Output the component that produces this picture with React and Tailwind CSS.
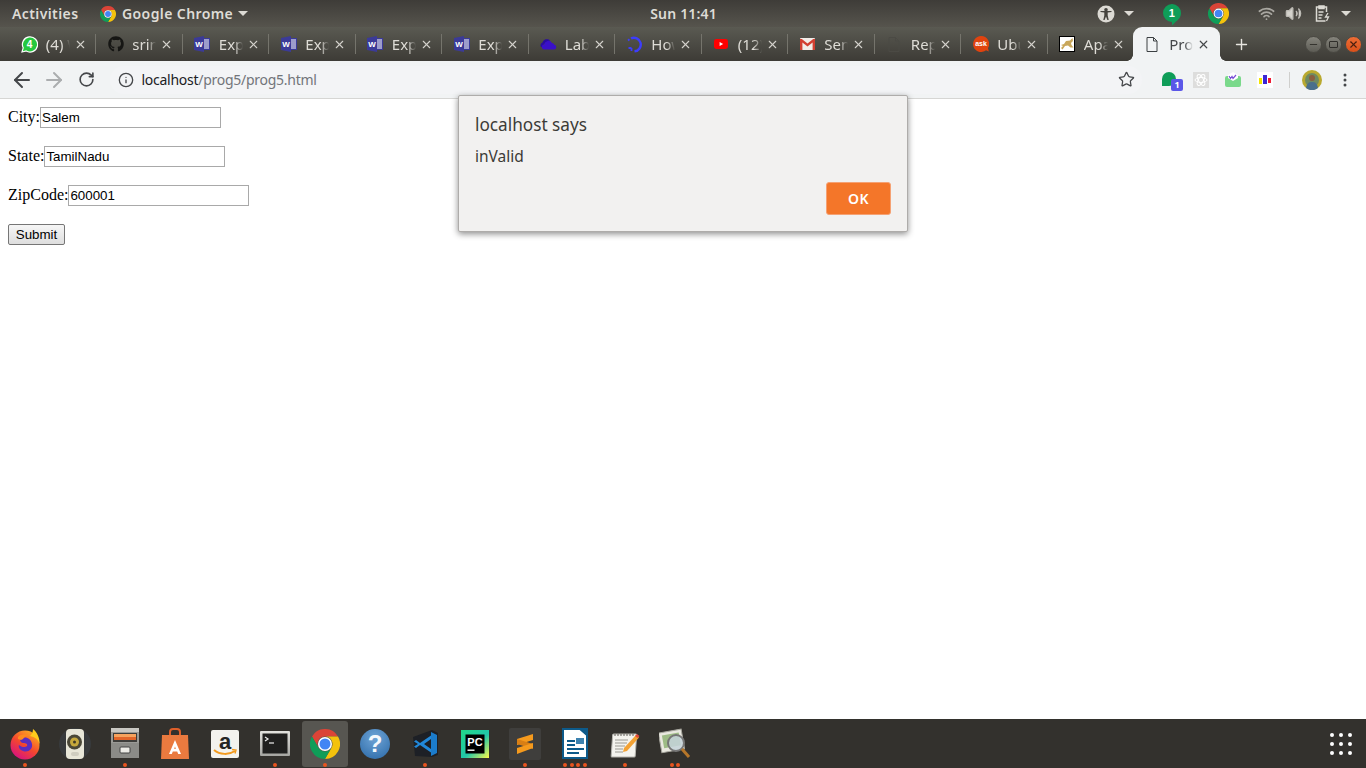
import React from "react";
import { ArrowLeft, ArrowRight, RotateCw, Star, Info, X, Plus, Minus, Wifi, Volume2 } from "lucide-react";
import { FaGithub } from "react-icons/fa";

const ui = "font-['Noto_Sans','Open_Sans',sans-serif]";

function Chrome({ size = 24 }) {
  return (
    <svg width={size} height={size} viewBox="0 0 24 24">
      <path d="M1.6 6A12 12 0 0 1 22.4 6H12A6 6 0 0 0 6.8 15Z" fill="#db4437" />
      <path d="M22.4 6A12 12 0 0 1 12 24L17.2 15A6 6 0 0 0 12 6Z" fill="#f4c20d" />
      <path d="M12 24A12 12 0 0 1 1.6 6L6.8 15A6 6 0 0 0 17.2 15Z" fill="#0f9d58" />
      <circle cx="12" cy="12" r="5.6" fill="#fff" />
      <circle cx="12" cy="12" r="4.4" fill="#4285f4" />
    </svg>
  );
}

const Whats = () => (
  <svg width="17" height="17" viewBox="0 0 17 17">
    <path d="M1 16l1.2-4.2A7.6 7.6 0 1 1 5.2 15z" fill="#25c83f" stroke="#fff" strokeWidth="1.2" />
    <text x="8.6" y="12" fontSize="10" fontWeight="700" fill="#fff" textAnchor="middle" fontFamily="Liberation Sans">4</text>
  </svg>
);
const Git = () => <FaGithub size={16} color="#161614" />;
const Word = () => (
  <svg width="16" height="16" viewBox="0 0 16 16">
    <rect x="8" y="2" width="8" height="12" fill="#3b3a98" />
    <path d="M0 2l10-2v16L0 14z" fill="#3b3a98" />
    <rect x="10" y="3.500" width="5" height="9" fill="#fff" />
    <path d="M10 5h5M10 7h5M10 9h5M10 11h5" stroke="#3b3a98" strokeWidth="1" />
    <text x="5" y="10.500" fontSize="8" fontWeight="700" fill="#fff" textAnchor="middle" fontFamily="Liberation Sans">W</text>
  </svg>
);
const Cloud = () => (
  <svg width="17" height="12" viewBox="0 0 17 12">
    <path d="M1 9a3 3 0 0 1 1.500-4.500A4.500 4.500 0 0 1 10 2.500C8 3 7 4 6.500 5 4 5 3 7 3.300 9z" fill="#2a0ca0" />
    <path d="M4.500 11.500a2.500 2.500 0 0 1-.3-5A4.200 4.200 0 0 1 12 5a2.500 2.500 0 0 1 2.300 1.800 2.400 2.400 0 0 1 .2 4.700z" fill="#3a10c8" />
  </svg>
);
const HowIcon = () => (
  <svg width="17" height="17" viewBox="0 0 17 17" fill="none">
    <path d="M5 2.400A6.800 6.800 0 1 1 8.500 15.300" stroke="#3d3dfb" strokeWidth="2.400" />
    <path d="M5.500 12v3M2.500 12h3M2 4.500l1.500-1.200" stroke="#3d3dfb" strokeWidth="1.800" />
  </svg>
);
const Yt = () => (
  <svg width="14" height="10" viewBox="0 0 14 10">
    <rect width="14" height="10" rx="2.400" fill="#f00" />
    <path d="M5.600 3l3.600 2-3.600 2z" fill="#fff" />
  </svg>
);
const Gmail = () => (
  <svg width="15" height="12" viewBox="0 0 15 12">
    <rect width="15" height="12" rx="1" fill="#f1ece8" />
    <path d="M0 12V1h1.800l5.700 4.600L13.200 1H15v11h-2.400V4.600L7.500 8.600 2.400 4.600V12z" fill="#d23f31" />
  </svg>
);
const DarkFile = () => (
  <svg width="12" height="15" viewBox="0 0 12 15" fill="none">
    <path d="M1 .5h6.500L11 4v10.500H1zM7.500.5V4H11" stroke="#4b4a44" />
  </svg>
);
const Ask = () => (
  <svg width="16" height="16" viewBox="0 0 16 16">
    <path d="M8 0a8 8 0 1 0 5 14.300l2.800 1.200-.8-3.400A8 8 0 0 0 8 0z" fill="#e0430f" />
    <text x="8" y="10.200" fontSize="7" fontWeight="700" fill="#fff" textAnchor="middle" fontFamily="Liberation Sans">ask</text>
  </svg>
);
const Tomcat = () => (
  <svg width="16" height="16" viewBox="0 0 16 16">
    <rect x=".5" y=".5" width="15" height="15" fill="#fff" stroke="#000" />
    <path d="M2 9l3-1 2-3 4-.5 2.500-2.500.5 3-2 2 .5 2 2 2.500h-3L9 9.500l-3 .5-2.500 3.500L2 12l2-2z" fill="#c9a75a" />
  </svg>
);
const FileOutline = () => (
  <svg width="12" height="15" viewBox="0 0 12 15" fill="none">
    <path d="M1 .5h6.500L11 4v10.500H1zM7.500.5V4H11" stroke="#3c4043" />
  </svg>
);

const tabs = [
  [Whats, "(4) WhatsApp"],
  [Git, "srinivasan"],
  [Word, "Experiment"],
  [Word, "Experiment"],
  [Word, "Experiment"],
  [Word, "Experiment"],
  [Cloud, "Lab Manual"],
  [HowIcon, "How to"],
  [Yt, "(12) YouTube"],
  [Gmail, "Sent Mail"],
  [DarkFile, "Report"],
  [Ask, "Ubuntu"],
  [Tomcat, "Apache"],
];

function Tab({ Icon, title, last }) {
  return (
    <div className="relative flex h-[34px] w-[86.500px] shrink-0 items-center">
      <div className="flex w-[36px] justify-center pl-[3px]"><Icon /></div>
      <div className="w-[24px] overflow-hidden whitespace-nowrap text-[15px] text-[#dedcd6] [mask-image:linear-gradient(to_right,black_65%,transparent)]">{title}</div>
      <X size={13} strokeWidth={2} className="ml-[4px] text-[#d4d2cc]" />
      {!last && <div className="absolute right-0 top-[7px] h-[20px] w-px bg-[#75746c]" />}
    </div>
  );
}

const Firefox = () => (
  <svg width="32" height="32" viewBox="0 0 32 32">
    <defs>
      <linearGradient id="ffa" x1="0.2" y1="0.9" x2="0.8" y2="0">
        <stop offset="0" stopColor="#d9157b" />
        <stop offset="0.45" stopColor="#f4472e" />
        <stop offset="1" stopColor="#ffb41f" />
      </linearGradient>
    </defs>
    <circle cx="16" cy="17" r="14.500" fill="url(#ffa)" />
    <path d="M24 1c4 3 7 9 6.500 15C29 11 26 9 21 8c2-2 3-4 3-7z" fill="#ffcb1c" />
    <path d="M11 11c5-3 11-1 12 5 1 5-4 9-9 7-3-1-5-4-4-6 2 2 6 3 8 1 1-2-1-3-4-3-1 0-3-1-3-4z" fill="#5b2dc0" />
    <path d="M9 9c3-3 8-3 11-1-3 0-5 1-6 3l-2 1-3-1z" fill="#ff8a1f" />
  </svg>
);
const Speaker = () => (
  <svg width="34" height="34" viewBox="0 0 34 34">
    <circle cx="17" cy="17" r="16" fill="#46586b" opacity=".25" />
    <rect x="8" y="2" width="18" height="30" rx="4" fill="#e8e6d8" />
    <circle cx="16.500" cy="15" r="7.500" fill="#4a4737" />
    <circle cx="16.500" cy="15" r="4.500" fill="#c6a83b" />
    <circle cx="16.500" cy="15" r="1.500" fill="#403a25" />
    <rect x="13" y="25" width="8" height="4" rx="2" fill="#cfcdc0" />
  </svg>
);
const Cabinet = () => (
  <svg width="30" height="31" viewBox="0 0 30 31">
    <rect x="1" width="28" height="30" rx="1" fill="#9a9a96" />
    <rect x="1" width="28" height="4" fill="#c9c8c3" />
    <rect x="3" y="5" width="24" height="9" fill="#3e3d3a" />
    <rect x="4" y="6" width="22" height="3" fill="#f6a35e" />
    <rect x="4" y="9" width="22" height="3" fill="#e2662a" />
    <rect x="1" y="15" width="28" height="15" fill="#8b8b87" />
    <rect x="10" y="19" width="10" height="6" rx="1" fill="#ecebe6" stroke="#444" />
  </svg>
);
const Bag = () => (
  <svg width="30" height="31" viewBox="0 0 30 31">
    <path d="M10 8V4a3 3 0 0 1 3-3h4a3 3 0 0 1 3 3v4" fill="none" stroke="#dd5f2a" strokeWidth="2" />
    <path d="M2 7h26l1 24H1z" fill="#ea7a3f" />
    <path d="M15 12l6 14h-2.800l-1-2.500h-4.400l-1 2.500H9z" fill="#fff" />
    <path d="M14.200 21h1.600L15 18.500z" fill="#ea7a3f" />
  </svg>
);
const Amazon = () => (
  <svg width="28" height="28" viewBox="0 0 28 28">
    <rect width="28" height="28" rx="2" fill="#f3f2ee" />
    <text x="14" y="19" fontSize="22" fontWeight="700" fill="#252525" textAnchor="middle" fontFamily="Liberation Sans">a</text>
    <path d="M3 20c6 5 15 5 21 1" fill="none" stroke="#f29a1f" strokeWidth="2" />
    <path d="M21 19.500l4 .5-1 3.500" fill="none" stroke="#f29a1f" strokeWidth="1.400" />
  </svg>
);
const Term = () => (
  <svg width="30" height="25" viewBox="0 0 30 25">
    <defs>
      <linearGradient id="tb" x1="0" y1="0" x2="0" y2="1">
        <stop offset="0" stopColor="#e2e2de" />
        <stop offset="1" stopColor="#a5a5a1" />
      </linearGradient>
    </defs>
    <rect width="30" height="25" rx="1" fill="url(#tb)" />
    <rect x="2.500" y="2.500" width="25" height="20" fill="#20201f" />
    <path d="M5 6l3 2-3 2" fill="none" stroke="#eee" strokeWidth="1.200" />
    <path d="M9 12h5" stroke="#eee" strokeWidth="1.200" />
  </svg>
);
const Help = () => (
  <div className="flex h-[30px] w-[30px] items-center justify-center rounded-full bg-[radial-gradient(circle_at_50%_30%,#6ea4d6,#2a68a6)] font-['Liberation_Sans',sans-serif] text-[24px] font-bold text-[#f4f8fc]">?</div>
);
const VSCode = () => (
  <svg width="28" height="30" viewBox="0 0 28 30">
    <path d="M2 8L21 1l6 3v22l-6 2-17-1z" fill="#1d2026" />
    <path d="M20 3l6 3v18l-6 3z" fill="#1b7ccc" />
    <path d="M20 10l-7 5 7 5v3.500L9 16l-4 3-2-1.500L7 15 3 12.500 5 11l4 3L20 6.500z" fill="#2188d9" />
  </svg>
);
const PyCharm = () => (
  <svg width="28" height="28" viewBox="0 0 28 28">
    <defs>
      <linearGradient id="pc" x1="0" y1="0" x2="1" y2="1">
        <stop offset="0" stopColor="#21d789" />
        <stop offset="0.55" stopColor="#21c7a8" />
        <stop offset="1" stopColor="#fcf84a" />
      </linearGradient>
    </defs>
    <rect width="28" height="28" fill="url(#pc)" />
    <rect x="4.500" y="4.500" width="19" height="19" fill="#000" />
    <text x="14" y="15.500" fontSize="11" fontWeight="700" fill="#fff" textAnchor="middle" fontFamily="Liberation Sans">PC</text>
    <rect x="6.500" y="19.500" width="7" height="1.400" fill="#fff" />
  </svg>
);
const Sublime = () => (
  <div className="flex h-[32px] w-[32px] items-center justify-center rounded-[2px] bg-[#3f3e3c]">
    <svg width="16" height="20" viewBox="0 0 16 20">
      <path d="M16 0v6L0 11V5z" fill="#f59a1d" />
      <path d="M0 5l16 5v5L0 10z" fill="#d97f14" />
      <path d="M16 9v5L0 20v-6z" fill="#f59a1d" />
    </svg>
  </div>
);
const Writer = () => (
  <svg width="26" height="31" viewBox="0 0 26 31">
    <path d="M1 1h17l7 6v23H1z" fill="#fff" stroke="#0d5a8a" strokeWidth="2" />
    <path d="M17 0h9v9z" fill="#0d5a8a" />
    <rect x="5" y="12" width="8" height="2" fill="#0d5a8a" />
    <rect x="5" y="16" width="8" height="2" fill="#0d5a8a" />
    <rect x="14" y="10" width="8" height="6" fill="#3e83b0" />
    <rect x="5" y="20" width="17" height="2" fill="#0d5a8a" />
    <rect x="5" y="24" width="12" height="2" fill="#0d5a8a" />
  </svg>
);
const Notes = () => (
  <svg width="30" height="28" viewBox="0 0 30 28">
    <rect x="1" y="4" width="24" height="23" rx="1" fill="#f4f3ee" stroke="#b5b4ae" transform="skewX(-4) translate(2 0)" />
    <path d="M5 3v3M8 3v3M11 3v3M14 3v3M17 3v3M20 3v3M23 3v3" stroke="#77766f" strokeWidth="1.200" />
    <path d="M5 10h13M5 13h12M5 16h10M5 19h8M5 22h8" stroke="#9a9992" />
    <path d="M13 22l1-4L26 5l3 2.500L17 21z" fill="#f3a234" />
    <path d="M25 6l2-2 2.500 2-2 2z" fill="#e04a3a" />
  </svg>
);
const Viewer = () => (
  <svg width="32" height="32" viewBox="0 0 32 32">
    <rect x="1" y="3" width="23" height="20" fill="#e9e8df" stroke="#a8a79f" transform="rotate(-10 12 13)" />
    <rect x="4" y="6" width="17" height="13" fill="#9dbb85" transform="rotate(-10 12 13)" />
    <circle cx="17" cy="15" r="8" fill="#c6d3da" fillOpacity=".85" stroke="#777" strokeWidth="2" />
    <path d="M23 21l7 8" stroke="#b6762a" strokeWidth="3" />
  </svg>
);

const dock = [
  [Firefox, 1],
  [Speaker, 0],
  [Cabinet, 1],
  [Bag, 0],
  [Amazon, 0],
  [Term, 1],
  [() => <Chrome size={30} />, 1, true],
  [Help, 0],
  [VSCode, 1],
  [PyCharm, 0],
  [Sublime, 1],
  [Writer, 4],
  [Notes, 1],
  [Viewer, 2],
];

const Caret = () => <span className="inline-block h-0 w-0 align-middle border-x-[5px] border-t-[5px] border-x-transparent border-t-[#dcdad4]" />;

export default function App() {
  return (
    <div className={`flex h-[768px] w-[1366px] flex-col overflow-hidden bg-white ${ui}`}>
      {/* top panel */}
      <div className="flex h-[27px] shrink-0 items-center bg-[linear-gradient(#3e3c38,#56544d)] pr-[15px] text-[14px] font-semibold tracking-[0.4px] text-[#dedcd6]">
        <span className="ml-[12px] w-[88px]">Activities</span>
        <Chrome size={16} />
        <span className="ml-[6px]">Google Chrome</span>
        <span className="ml-[5px] flex items-center"><Caret /></span>
        <span className="ml-[402px] w-[78px] tracking-[0.2px]">Sun 11:41</span>
        <div className="ml-auto flex items-center">
          <svg width="18" height="18" viewBox="0 0 18 18">
            <circle cx="9" cy="9" r="8.500" fill="#dcdad4" />
            <circle cx="9" cy="4.800" r="1.800" fill="#45433e" />
            <path d="M3.500 7l3.800.6v3l-1 4.400h1.300L9 11.500l1.400 3.500h1.300l-1-4.400v-3l3.800-.6V6H3.500z" fill="#45433e" />
          </svg>
          <span className="ml-[9px] flex items-center"><Caret /></span>
          <svg className="ml-[29px] mt-[3px]" width="18" height="22" viewBox="0 0 18 22">
            <path d="M9 0a9 9 0 0 1 9 9c0 4.500-3 7-5 8.500L9 21.500V18A9 9 0 0 1 9 0z" fill="#0f9d58" />
            <text x="9" y="13" fontSize="11" fontWeight="700" fill="#fff" textAnchor="middle" fontFamily="Liberation Sans">1</text>
          </svg>
          <span className="ml-[27px] flex"><Chrome size={21} /></span>
          <Wifi size={17} strokeWidth={2.400} className="ml-[29px] text-[#a9a7a1]" />
          <Volume2 size={17} strokeWidth={2} fill="#d4d2cc" className="ml-[10px] text-[#bcbab4]" />
          <svg className="ml-[13px]" width="15" height="17" viewBox="0 0 15 17" fill="none" stroke="#dcdad4" strokeWidth="1.500">
            <path d="M4 2H1.500v14h9M9 2h2.500v5" />
            <rect x="4" y="1" width="5" height="2.500" fill="#dcdad4" />
            <path d="M3.500 7h5M3.500 10h4M3.500 13h3" />
            <path d="M13 8l-2.500 4h3l-2 4" strokeWidth="1.300" />
          </svg>
          <span className="ml-[11px] flex items-center"><Caret /></span>
        </div>
      </div>

      {/* tab strip */}
      <div className="flex h-[34px] shrink-0 items-end bg-[linear-gradient(#5a5a52,#3d3b36)] pl-[9.800px]">
        {tabs.map(([Icon, t], i) => (
          <Tab key={i} Icon={Icon} title={t} last={i === tabs.length - 1} />
        ))}
        <div className="relative ml-[-1px] flex h-[34px] w-[87px] shrink-0 items-center rounded-t-[9px] bg-[#f1f3f4]">
          <div className="absolute bottom-0 left-[-6px] h-[6px] w-[6px] bg-[radial-gradient(circle_at_0_0,transparent_5.500px,#f1f3f4_6px)]" />
          <div className="absolute bottom-0 right-[-6px] h-[6px] w-[6px] bg-[radial-gradient(circle_at_100%_0,transparent_5.500px,#f1f3f4_6px)]" />
          <div className="flex w-[36px] justify-center pl-[2px]"><FileOutline /></div>
          <div className="w-[24px] overflow-hidden whitespace-nowrap text-[15px] text-[#45474a] [mask-image:linear-gradient(to_right,black_65%,transparent)]">Prog5</div>
          <X size={13} strokeWidth={2.200} className="ml-[4px] text-[#45474a]" />
        </div>
        <Plus size={17} strokeWidth={2} className="mb-[8px] ml-[13px] text-[#e8e6e0]" />
        <div className="mb-[8px] ml-auto mr-[4px] flex items-center gap-[3px]">
          <div className="flex h-[17px] w-[17px] items-center justify-center rounded-full border border-[#4a4943] bg-[linear-gradient(#85847c,#5d5c55)]"><Minus size={11} className="text-[#2f2e2a]" /></div>
          <div className="flex h-[17px] w-[17px] items-center justify-center rounded-full border border-[#4a4943] bg-[linear-gradient(#85847c,#5d5c55)]"><div className="h-[7px] w-[9px] rounded-[1px] border border-[#2f2e2a]" /></div>
          <div className="flex h-[17px] w-[17px] items-center justify-center rounded-full border border-[#4a4943] bg-[linear-gradient(#ee6d35,#d9501a)]"><X size={11} strokeWidth={2.400} className="text-[#4a2010]" /></div>
        </div>
      </div>

      {/* toolbar */}
      <div className="flex h-[38px] shrink-0 items-center border-b border-[#d6d6d4] bg-[#f1f3f4] pl-[10px] pr-[19px]">
        <ArrowLeft size={24} strokeWidth={2} className="text-[#45474a]" />
        <ArrowRight size={24} strokeWidth={2} className="ml-[8px] text-[#abadaf]" />
        <RotateCw size={17} strokeWidth={2.300} className="ml-[11.500px] text-[#45474a]" />
        <div className="ml-[15px] flex h-[28px] flex-1 items-center rounded-full bg-[#f3f4f6] pl-[8px] pr-[7px]">
          <Info size={16} strokeWidth={2} className="text-[#45474a]" />
          <div className="ml-[8px] text-[14px] tracking-[-0.27px]">
            <span className="text-[#202124]">localhost</span><span className="text-[#72757a]">/prog5/prog5.html</span>
          </div>
          <Star size={17} strokeWidth={1.800} className="ml-auto text-[#45474a]" />
        </div>
        <div className="relative ml-[20px] h-[16px] w-[16px]">
          <div className="h-[14px] w-[14px] rounded-full rounded-bl-[3px] bg-[#0f9d58]" />
          <div className="absolute left-[9px] top-[7px] flex h-[12px] w-[12px] items-center justify-center rounded-[2px] bg-[#5b57e8] text-[9px] font-bold text-white">1</div>
        </div>
        <div className="ml-[15px] flex h-[16px] w-[16px] items-center justify-center bg-[#dddddc]">
          <svg width="14" height="14" viewBox="0 0 14 14" fill="none" stroke="#fff">
            <ellipse cx="7" cy="7" rx="6" ry="2.500" />
            <ellipse cx="7" cy="7" rx="6" ry="2.500" transform="rotate(60 7 7)" />
            <ellipse cx="7" cy="7" rx="6" ry="2.500" transform="rotate(120 7 7)" />
          </svg>
        </div>
        <svg className="ml-[16px]" width="16" height="16" viewBox="0 0 16 16">
          <rect y="4" width="16" height="11" rx="2" fill="#7ad98b" />
          <path d="M3 6V3l5-3 5 3v3L8 9z" fill="#fff" />
          <path d="M4 4l1.500 2.500L7 4.500l1 2 3-3.500" fill="none" stroke="#7a4fd8" strokeWidth="1.200" />
        </svg>
        <div className="ml-[16px] flex h-[16px] w-[16px] items-center justify-center gap-[1px] bg-white">
          <div className="mt-[2px] h-[6px] w-[3px] bg-[#f3e500]" />
          <div className="h-[9px] w-[4px] bg-[#3b27d6]" />
          <div className="mt-[2px] h-[5px] w-[3px] bg-[#ee1c35]" />
        </div>
        <div className="ml-[16px] h-[16px] w-px bg-[#cfcfcd]" />
        <svg className="ml-[12px]" width="20" height="20" viewBox="0 0 20 20">
          <circle cx="10" cy="10" r="10" fill="#b9a92f" />
          <circle cx="10" cy="10" r="7" fill="#6f8a62" />
          <circle cx="10" cy="8" r="3" fill="#8a5f3f" />
          <path d="M4 18c1-5 3-6 6-6s5 1 6 6a10 10 0 0 1-12 0z" fill="#4a6f8c" />
        </svg>
        <svg className="ml-[21px]" width="4" height="14" viewBox="0 0 4 14" fill="#45474a">
          <circle cx="2" cy="2" r="1.500" />
          <circle cx="2" cy="7" r="1.500" />
          <circle cx="2" cy="12" r="1.500" />
        </svg>
      </div>

      {/* page */}
      <main className="relative flex-1 bg-white p-[8px] font-['Liberation_Serif',serif] text-[16px] text-black">
        <div className="flex flex-col items-start gap-[18px]">
          {[["City:", "Salem"], ["State:", "TamilNadu"], ["ZipCode:", "600001"]].map(([l, v]) => (
            <div key={l} className="flex h-[21px] items-baseline leading-[16px]">
              <span>{l}</span>
              <input readOnly value={v} className="h-[21px] w-[181px] border border-[#a9a9a9] pl-[1px] pr-[2px] font-['Liberation_Sans',sans-serif] text-[13.330px] text-black outline-none" />
            </div>
          ))}
          <button className="h-[21px] w-[57px] rounded-[2px] border border-[#767676] bg-[linear-gradient(#f6f6f6,#dedede)] font-['Liberation_Sans',sans-serif] text-[13.330px] text-black">Submit</button>
        </div>

        <div className={`absolute left-[458px] top-[-4px] h-[137px] w-[450px] rounded-[2px] border border-[#aeacaa] bg-[#f2f1f0] pl-[16px] pr-[16px] shadow-[0_2px_6px_rgba(0,0,0,0.45)] ${ui}`}>
          <div className="mt-[16px] text-[17.200px] leading-[26px] text-[#3c3b37]">localhost says</div>
          <div className="mt-[6px] text-[15.500px] leading-[24px] text-[#3c3b37]">inValid</div>
          <div className="mt-[14px] flex justify-end">
            <button className="h-[33px] w-[65px] rounded-[3px] border border-[#f5a173] bg-[#f47629] text-[14px] font-semibold tracking-[0.5px] text-white">OK</button>
          </div>
        </div>
      </main>

      {/* dock */}
      <div className="flex h-[49px] shrink-0 items-center bg-[#33312d] pr-[14px]">
        {dock.map(([Icon, dots, active], i) => (
          <div key={i} className="relative flex h-[49px] w-[50px] items-center justify-center">
            {active && <div className="absolute left-[2px] top-[2px] h-[46px] w-[46px] rounded-[3px] bg-[#575651]" />}
            <div className="relative flex"><Icon /></div>
            {dots > 0 && (
              <div className="absolute bottom-[1px] left-0 flex w-full justify-center gap-[2.500px]">
                {Array.from({ length: dots }).map((_, k) => (
                  <span key={k} className="h-[4px] w-[4px] rounded-full bg-[#e9541f]" />
                ))}
              </div>
            )}
          </div>
        ))}
        <div className="ml-auto grid grid-cols-3 gap-[5px]">
          {Array.from({ length: 9 }).map((_, i) => (
            <span key={i} className="h-[4px] w-[4px] rounded-full bg-white" />
          ))}
        </div>
      </div>
    </div>
  );
}
